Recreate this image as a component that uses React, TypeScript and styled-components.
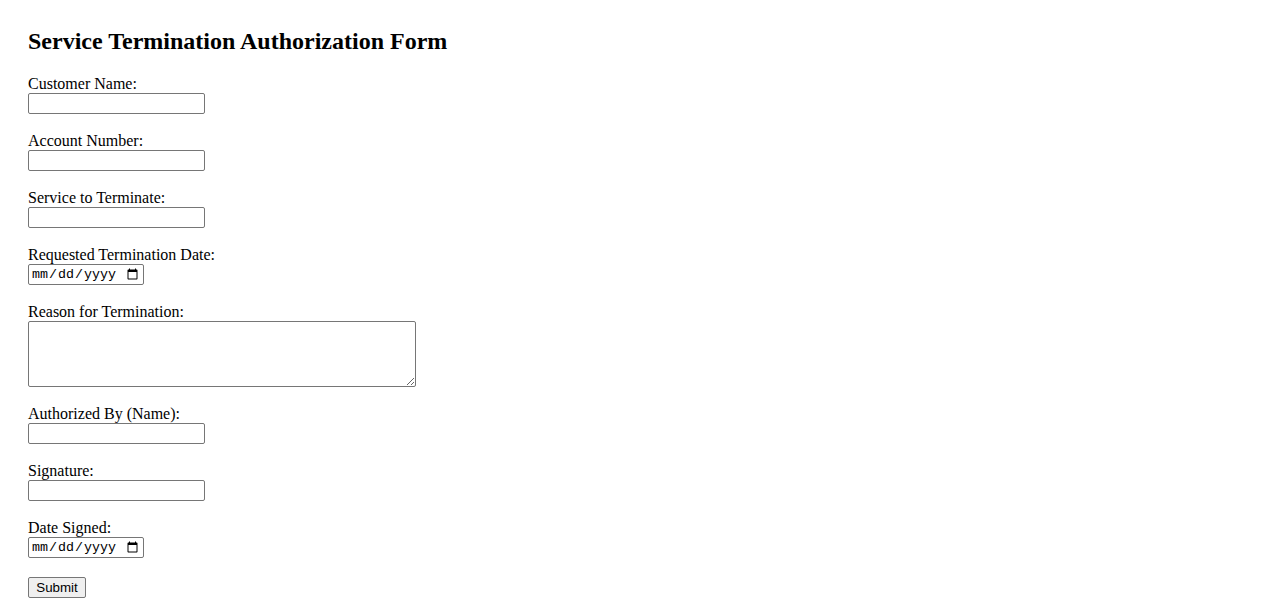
import React from "react";
import styled, { createGlobalStyle } from "styled-components";

const Global = createGlobalStyle`
  html, body { margin: 0; padding: 0; background: #ffffff; }
  body { font-family: "Liberation Serif", "Times New Roman", serif; color: #000; font-size: 16px; }
`;

const Page = styled.div`
  padding: 28px 28px 0 28px;
`;

const Title = styled.h2`
  margin: 0 0 20px 0;
  font-size: 24px;
  font-weight: bold;
  line-height: normal;
`;

const Form = styled.form`
  display: flex;
  flex-direction: column;
  align-items: flex-start;
`;

const Field = styled.div`
  display: flex;
  flex-direction: column;
  align-items: flex-start;
  margin-bottom: 18px;
`;

const Label = styled.label`
  display: block;
  font-size: 16px;
  line-height: normal;
`;

const TextInput = styled.input<{ $w?: number }>`
  box-sizing: border-box;
  width: ${(p) => p.$w ?? 177}px;
  height: 21px;
  margin: 0;
  padding: 1px 2px;
  border: 1px solid #767676;
  border-radius: 2px;
  background: #fff;
  font-family: "Liberation Sans", Arial, sans-serif;
  font-size: 13.333px;
`;

const DateInput = styled(TextInput)`
  font-family: "Liberation Mono", "DejaVu Sans Mono", monospace;
`;

const Area = styled.textarea`
  box-sizing: border-box;
  width: 388px;
  height: 66px;
  margin: 0;
  padding: 2px;
  border: 1px solid #767676;
  border-radius: 2px;
  font-family: "Liberation Mono", monospace;
  font-size: 13.333px;
`;

const SubmitButton = styled.button`
  box-sizing: border-box;
  width: 58px;
  height: 21px;
  margin: 1px 0 0 0;
  padding: 1px 6px;
  border: 1px solid #767676;
  border-radius: 2px;
  background: #efefef;
  color: #000;
  font-family: "Liberation Sans", Arial, sans-serif;
  font-size: 13.333px;
  line-height: normal;
`;

const fields: { id: string; label: string; kind: "text" | "date" | "area" }[] = [
  { id: "customerName", label: "Customer Name:", kind: "text" },
  { id: "accountNumber", label: "Account Number:", kind: "text" },
  { id: "service", label: "Service to Terminate:", kind: "text" },
  { id: "termDate", label: "Requested Termination Date:", kind: "date" },
  { id: "reason", label: "Reason for Termination:", kind: "area" },
  { id: "authorizedBy", label: "Authorized By (Name):", kind: "text" },
  { id: "signature", label: "Signature:", kind: "text" },
  { id: "dateSigned", label: "Date Signed:", kind: "date" },
];

export default function App() {
  return (
    <Page>
      <Global />
      <Title>Service Termination Authorization Form</Title>
      <Form onSubmit={(e) => e.preventDefault()}>
        {fields.map((f) => (
          <Field key={f.id}>
            <Label htmlFor={f.id}>{f.label}</Label>
            {f.kind === "text" && <TextInput id={f.id} type="text" />}
            {f.kind === "date" && <DateInput id={f.id} type="date" $w={116} />}
            {f.kind === "area" && <Area id={f.id} />}
          </Field>
        ))}
        <SubmitButton type="submit">Submit</SubmitButton>
      </Form>
    </Page>
  );
}
